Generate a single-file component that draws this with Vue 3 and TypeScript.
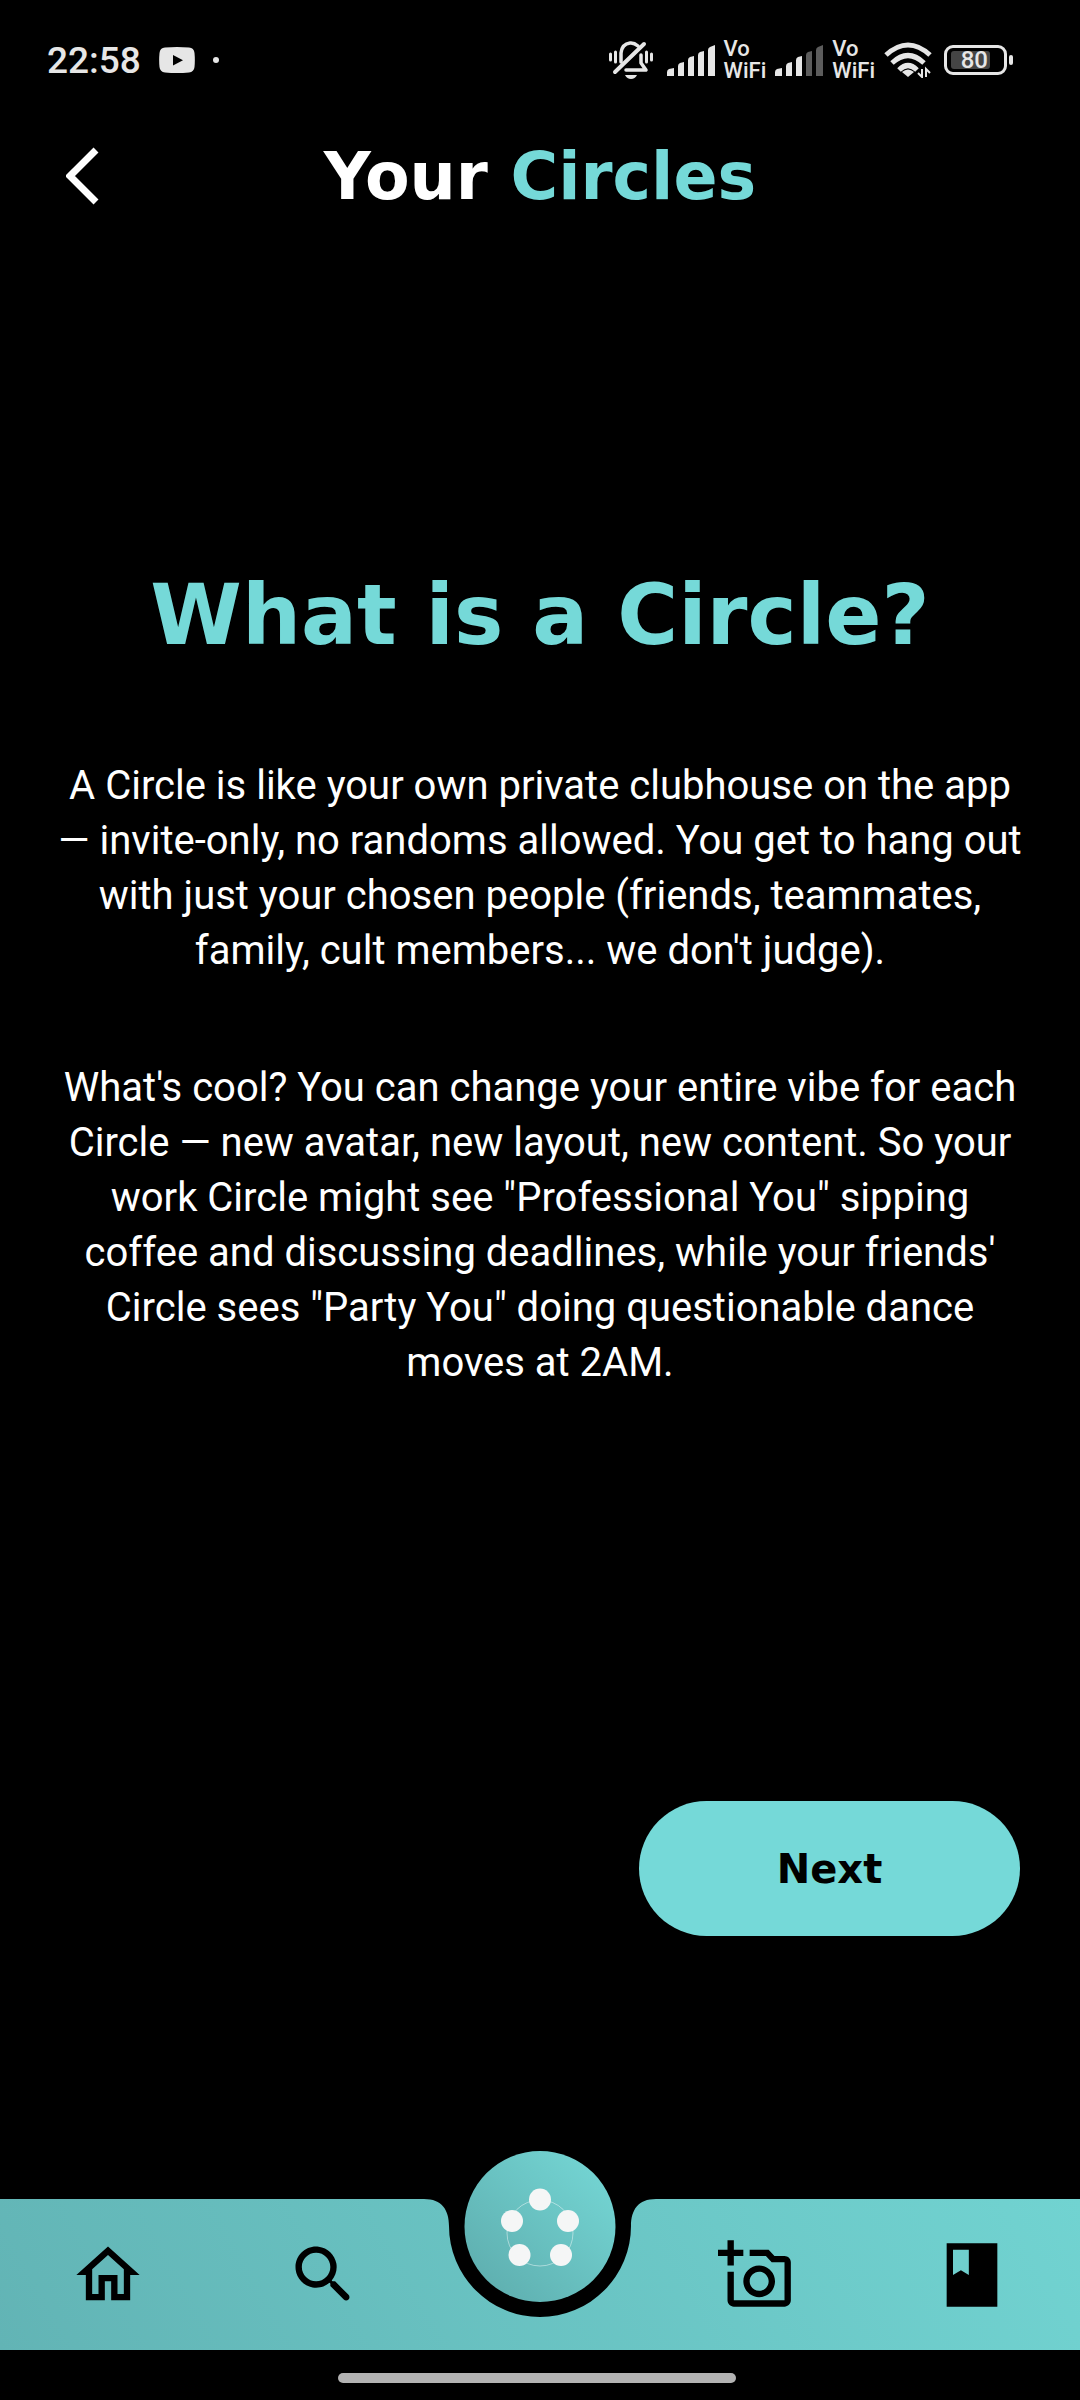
<script setup lang="ts">
interface NavItem {
  label: string
  path: string
}

const leftItems: NavItem[] = [
  {
    label: 'Home',
    path: 'M12 5.69l5 4.5V18h-2v-6H9v6H7v-7.81l5-4.5M12 3L2 12h3v8h6v-6h2v6h6v-8h3L12 3z',
  },
  {
    label: 'Search',
    path: 'M15.5 14h-.79l-.28-.27c1.2-1.4 1.82-3.31 1.48-5.34-.47-2.78-2.79-5-5.59-5.34-4.23-.52-7.79 3.04-7.27 7.27.34 2.8 2.56 5.12 5.34 5.59 2.03.34 3.94-.28 5.34-1.48l.27.28v.79l4.25 4.25c.41.41 1.08.41 1.49 0 .41-.41.41-1.08 0-1.49L15.5 14zm-6 0C7.01 14 5 11.99 5 9.5S7.01 5 9.5 5 14 7.01 14 9.5 11.99 14 9.5 14z',
  },
]

const rightItems: NavItem[] = [
  {
    label: 'Add photo',
    path: 'M21 6h-3.17L16 4h-6v2h5.12l1.83 2H21v12H5v-9H3v9c0 1.1.9 2 2 2h16c1.1 0 2-.9 2-2V8c0-1.1-.9-2-2-2zM8 14c0 2.76 2.24 5 5 5s5-2.24 5-5-2.24-5-5-5-5 2.24-5 5zm5-3c1.65 0 3 1.35 3 3s-1.35 3-3 3-3-1.35-3-3 1.35-3 3-3zM5 6h3V4H5V1H3v3H0v2h3v3h2z',
  },
  {
    label: 'Journal',
    path: 'M4 2h16v20H4zM6 4v8l2.5-1.5L11 12V4z',
  },
]

const signalBars = [
  'M0 31v-4q0-2 2-3l5-1v8z',
  'M11 31v-10q0-2 2-3l4-1v14z',
  'M21 31v-16q0-2 2-3l4-1v20z',
  'M31 31v-21q0-2 2-3l4-1v25z',
  'M41 31v-26q0-2 2-3l5-2v31z',
]

const signals: number[] = [5, 3]

const paragraphs: string[] = [
  "A Circle is like your own private clubhouse on the app — invite-only, no randoms allowed. You get to hang out with just your chosen people (friends, teammates, family, cult members... we don't judge).",
  'What\'s cool? You can change your entire vibe for each Circle — new avatar, new layout, new content. So your work Circle might see "Professional You" sipping coffee and discussing deadlines, while your friends\' Circle sees "Party You" doing questionable dance moves at 2AM.',
]
</script>

<template>
  <div class="screen">
    <div class="status">
      <div class="status-group status-left">
        <span class="time">22:58</span>
        <svg width="36" height="26" viewBox="0 0 36 26" aria-hidden="true">
          <path
            fill="#e6e6e6"
            fill-rule="evenodd"
            d="M6 .6Q18-.4 30 .6Q35 1 35.500 6Q36.200 13 35.500 20Q35 25 30 25.400Q18 26.400 6 25.400Q1 25 .5 20Q-.2 13 .5 6Q1 1 6 .6zM14 8v10.500l10-5.200z"
          />
        </svg>
        <span class="more-dot"></span>
      </div>

      <div class="status-group status-right">
        <svg width="49" height="40" viewBox="0 0 49 40" fill="none" stroke="#e6e6e6" stroke-linecap="round" aria-hidden="true">
          <path stroke-width="3" d="M1.500 14v6M6.500 12v10M37.500 12v10M42.500 14v6" />
          <path stroke-width="3.500" stroke-linejoin="round" d="M12 22V13Q13 4 21 3q4-.5 8 3M32 15v8l5 7H17" />
          <path stroke-width="4" d="M35 4L6 32" />
          <path fill="#e6e6e6" stroke="none" d="M16 35h12q-2 4-6 4t-6-4z" />
        </svg>
        <template v-for="level in signals" :key="level">
          <svg width="48" height="31" viewBox="0 0 48 31" aria-hidden="true">
            <path v-for="(bar, i) in signalBars" :key="i" :d="bar" :fill="i < level ? '#e6e6e6' : '#5c5c5c'" />
          </svg>
          <span class="carrier">Vo<br />WiFi</span>
        </template>
        <svg width="51" height="36" viewBox="0 0 51 36" fill="none" stroke="#e6e6e6" aria-hidden="true">
          <path stroke-width="5" d="M2 13Q24-7 46 13" />
          <path stroke-width="5" d="M8 21Q24 6 40 21" />
          <path stroke-width="5" d="M15 28Q24 19 33 28" />
          <path fill="#e6e6e6" stroke="none" d="M18 30q6-5 12 0l-6 5z" />
          <path stroke-width="2" d="M38 27v8l-4-4M42 35v-8l4 4" />
        </svg>
        <span class="battery"><span class="battery-level">80</span></span>
      </div>
    </div>

    <header class="header">
      <button class="back" type="button" aria-label="Back">
        <svg width="34" height="58" viewBox="0 0 34 58" aria-hidden="true">
          <path fill="none" stroke="#fff" stroke-width="7" d="M30 3L4 29L30 55" />
        </svg>
      </button>
      <h1 class="title">Your <span class="accent">Circles</span></h1>
    </header>

    <main class="content">
      <h2 class="heading">What is a Circle?</h2>
      <p v-for="(text, i) in paragraphs" :key="i" class="copy">{{ text }}</p>
      <button class="next" type="button">Next</button>
    </main>

    <nav class="nav">
      <svg class="notch" width="240" height="118" viewBox="0 0 240 118" aria-hidden="true">
        <path d="M0-2H240V0H236C218 0 211 11 211 27A91 91 0 0 1 29 27C29 11 22 0 4 0H0z" />
      </svg>
      <button v-for="item in leftItems" :key="item.label" class="nav-item" type="button" :aria-label="item.label">
        <svg width="76" height="76" viewBox="0 0 24 24"><path fill-rule="evenodd" :d="item.path" /></svg>
      </button>
      <div class="nav-center">
        <button class="orb" type="button" aria-label="Circles">
          <svg width="151" height="151" viewBox="0 0 151 151">
            <circle cx="75.500" cy="82" r="33" fill="none" stroke="#fff" stroke-opacity=".45" />
            <g fill="#f5f6f6">
              <circle cx="75.500" cy="48.500" r="11" />
              <circle cx="47.500" cy="70" r="11" />
              <circle cx="103.500" cy="70" r="11" />
              <circle cx="55" cy="104" r="11" />
              <circle cx="96.500" cy="104" r="11" />
            </g>
          </svg>
        </button>
      </div>
      <button v-for="item in rightItems" :key="item.label" class="nav-item" type="button" :aria-label="item.label">
        <svg width="76" height="76" viewBox="0 0 24 24"><path fill-rule="evenodd" :d="item.path" /></svg>
      </button>
    </nav>
    <div class="gesture"><span class="gesture-bar"></span></div>
  </div>
</template>

<style>
body {
  margin: 0;
  background: #000;
}
</style>

<style scoped>
.screen {
  display: flex;
  flex-direction: column;
  min-height: 100vh;
  background: #000;
  color: #fff;
  font-family: Roboto, sans-serif;
}

button {
  padding: 0;
  border: 0;
  background: none;
  color: inherit;
  cursor: pointer;
}

svg {
  display: block;
  flex: none;
}

.status {
  display: flex;
  align-items: center;
  justify-content: space-between;
  height: 120px;
  padding: 0 67px 0 47px;
  color: #e6e6e6;
}

.status-group {
  display: flex;
  align-items: center;
}

.status-left {
  gap: 18px;
}

.status-right {
  gap: 9px;
}

.time {
  padding-top: 2px;
  font-size: 37px;
  font-weight: 500;
  line-height: 44px;
}

.more-dot {
  width: 6px;
  height: 6px;
  border-radius: 50%;
  background: #e6e6e6;
}

.carrier {
  font-size: 22px;
  font-weight: 500;
  line-height: 22px;
}

.battery {
  position: relative;
  display: flex;
  box-sizing: border-box;
  width: 63px;
  height: 30px;
  margin-right: 6px;
  padding: 3px 4px;
  border: 3px solid #e6e6e6;
  border-radius: 9px;
}

.battery::after {
  content: '';
  position: absolute;
  top: 7px;
  right: -9px;
  width: 4px;
  height: 10px;
  border-radius: 2px;
  background: #e6e6e6;
}

.battery-level {
  box-sizing: border-box;
  width: 39px;
  padding-right: 2px;
  border-radius: 3px;
  background: #444;
  font-size: 24px;
  font-weight: 500;
  line-height: 19px;
  text-align: right;
}

.header {
  display: grid;
  grid-template-columns: 1fr auto 1fr;
  align-items: center;
  height: 112px;
  padding: 0 66px;
}

.back {
  justify-self: start;
}

.title,
.heading,
.next {
  font-family: 'DejaVu Sans', sans-serif;
  font-weight: 700;
}

.title {
  margin: 0;
  padding-top: 2px;
  font-size: 65px;
  line-height: 80px;
}

.accent {
  color: #75d9d8;
}

.content {
  display: flex;
  flex: 1;
  flex-direction: column;
  padding: 334px 54px 263px;
}

.heading {
  margin: 0 0 10px;
  color: #75d9d8;
  font-size: 83px;
  line-height: 100px;
  text-align: center;
}

.copy {
  margin: 82px 0 0;
  font-size: 40px;
  line-height: 55px;
  text-align: center;
}

.next {
  align-self: flex-end;
  width: 381px;
  height: 135px;
  margin: auto 6px 0 0;
  border-radius: 68px;
  background: #75d9d8;
  color: #000;
  font-size: 40px;
}

.nav {
  position: relative;
  display: grid;
  grid-template-columns: repeat(5, 1fr);
  height: 151px;
  background: linear-gradient(60deg, #62b4b5, #71d3d1);
}

.notch {
  position: absolute;
  top: 0;
  left: 50%;
  transform: translateX(-50%);
  fill: #000;
}

.nav-item {
  display: flex;
  align-items: center;
  justify-content: center;
}

.nav-center {
  position: relative;
}

.orb {
  position: absolute;
  top: -48px;
  left: 50%;
  width: 151px;
  height: 151px;
  border-radius: 50%;
  background: linear-gradient(45deg, #5caaab, #76d9d7);
  transform: translateX(-50%);
}

.gesture {
  display: flex;
  align-items: center;
  justify-content: center;
  box-sizing: border-box;
  height: 50px;
  padding: 6px 6px 0 0;
}

.gesture-bar {
  width: 37%;
  height: 10px;
  border-radius: 5px;
  background: #b3b3b3;
}
</style>
